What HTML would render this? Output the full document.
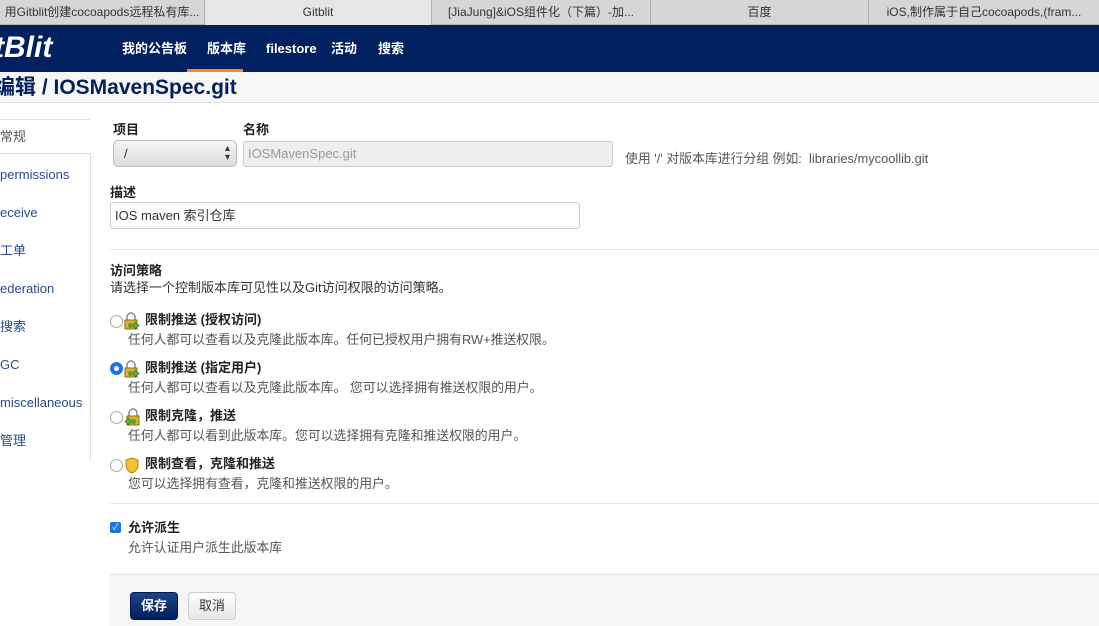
<!DOCTYPE html>
<html><head><meta charset="utf-8"><style>
*{box-sizing:border-box;margin:0;padding:0}
body{width:1099px;height:626px;overflow:hidden;background:#fff;font-family:"Liberation Sans","Noto Sans CJK SC",sans-serif;font-size:13px;line-height:16px;color:#333;position:relative}
.abs{position:absolute}
.tabs{top:0;left:0;width:1099px;height:25px;background:#d6d6d6;border-bottom:1px solid #b5b5b5}
.tab{position:absolute;top:0;height:25px;line-height:24px;text-align:center;font-size:12px;color:#333;border-right:1px solid #b0b0b0;white-space:nowrap;overflow:hidden}
.nav{top:25px;left:0;width:1099px;height:47px;background:#002060}
.nav a{position:absolute;top:0;line-height:47px;color:#fff;font-weight:bold;font-size:13px}
.hdr{top:72px;left:0;width:1099px;height:31px;background:#f7f7f7;border-bottom:1px solid #ddd}
.side a{position:absolute;left:0;color:#2a4a8a;font-size:13px}
.lbl{font-weight:bold;color:#222;font-size:13px}
.desc{color:#555;font-size:12.85px}
.radio{position:absolute;left:110px;width:13px;height:13px;border-radius:50%;border:1px solid #aaa;background:#fff}
</style></head><body>
<div class="abs tabs">
<div class="tab" style="left:0;width:205px">用Gitblit创建cocoapods远程私有库...</div>
<div class="tab" style="left:205px;width:227px;background:#e6e6e6">Gitblit</div>
<div class="tab" style="left:432px;width:219px">[JiaJung]&amp;iOS组件化（下篇）-加...</div>
<div class="tab" style="left:651px;width:218px">百度</div>
<div class="tab" style="left:869px;width:230px;border-right:none">iOS,制作属于自己cocoapods,(fram...</div>
</div>
<div class="abs nav">
<div style="position:absolute;left:-6px;top:6px;line-height:34px;color:#fff;font-weight:bold;font-style:italic;font-size:30px">tBlit</div>
<a style="left:122px">我的公告板</a>
<a style="left:207px">版本库</a>
<a style="left:266px">filestore</a>
<a style="left:331px">活动</a>
<a style="left:378px">搜索</a>
<div style="position:absolute;left:187px;top:44px;width:56px;height:3px;background:#f58a1f"></div>
</div>
<div class="abs hdr"><div style="position:absolute;left:-6px;top:3px;line-height:26px;font-size:21px;font-weight:bold;color:#002060">编辑 / IOSMavenSpec.git</div></div>

<div class="abs" style="left:0;top:119px;width:90px;border-top:1px solid #ddd"></div>
<div class="abs" style="left:0;top:153px;width:91px;height:308px;border-top:1px solid #ddd;border-right:1px solid #ddd"></div>
<div class="side">
<div class="abs" style="left:0;top:129px;color:#555">常规</div>
<a style="top:167px">permissions</a>
<a style="top:205px">eceive</a>
<a style="top:243px">工单</a>
<a style="top:281px">ederation</a>
<a style="top:319px">搜索</a>
<a style="top:357px">GC</a>
<a style="top:395px">miscellaneous</a>
<a style="top:433px">管理</a>
</div>

<div class="abs lbl" style="left:113px;top:122px">项目</div>
<div class="abs lbl" style="left:243px;top:122px">名称</div>
<div class="abs" style="left:113px;top:140px;width:124px;height:27px;border-radius:5px;border:1px solid #bbb;background:linear-gradient(#f4f4f4,#ddd);padding:5px 10px;color:#333">/<span style="position:absolute;right:6px;top:3px;font-size:10px;line-height:9px">▴<br>▾</span></div>
<div class="abs" style="left:243px;top:141px;width:370px;height:26px;border:1px solid #ccc;background:#eee;border-radius:3px;padding:4px 4px;color:#999">IOSMavenSpec.git</div>
<div class="abs desc" style="left:625px;top:151px">使用 '/' 对版本库进行分组 例如:&nbsp; libraries/mycoollib.git</div>
<div class="abs lbl" style="left:110px;top:185px">描述</div>
<div class="abs" style="left:110px;top:202px;width:470px;height:27px;border:1px solid #ccc;border-radius:3px;padding:5px 4px;color:#333">IOS maven 索引仓库</div>
<div class="abs" style="left:110px;top:249px;width:989px;border-top:1px solid #e5e5e5"></div>

<div class="abs lbl" style="left:110px;top:263px">访问策略</div>
<div class="abs" style="left:110px;top:280px;color:#333">请选择一个控制版本库可见性以及Git访问权限的访问策略。</div>

<div class="radio" style="top:315px"></div>
<div class="radio" style="top:362px;background:#1a73e8;border-color:#1a73e8"><div style="width:5px;height:5px;background:#fff;border-radius:50%;margin:3px"></div></div>
<div class="radio" style="top:411px"></div>
<div class="radio" style="top:459px"></div>
<svg class="abs" style="left:123px;top:312px" width="18" height="170">
<g><path d="M4 8V5a4 4 0 0 1 8 0v3" fill="none" stroke="#888" stroke-width="1.5"/><rect x="2" y="8" width="12" height="9" fill="#d9b23a" stroke="#8a6d10"/><path d="M6 12h6v-2l4 3.5-4 3.5v-2H6z" fill="#5cb82e" stroke="#2f7a14" stroke-width=".7"/></g>
<g transform="translate(0,48)"><path d="M4 8V5a4 4 0 0 1 8 0v3" fill="none" stroke="#888" stroke-width="1.5"/><rect x="2" y="8" width="12" height="9" fill="#d9b23a" stroke="#8a6d10"/><path d="M6 12h6v-2l4 3.5-4 3.5v-2H6z" fill="#5cb82e" stroke="#2f7a14" stroke-width=".7"/></g>
<g transform="translate(0,96)"><path d="M6 8V5a4 4 0 0 1 8 0v3" fill="none" stroke="#888" stroke-width="1.5"/><rect x="4" y="8" width="12" height="9" fill="#d9b23a" stroke="#8a6d10"/><path d="M12 12H6v-2l-4 3.5 4 3.5v-2h6z" fill="#5cb82e" stroke="#2f7a14" stroke-width=".7"/></g>
<g transform="translate(0,144)"><path d="M9 2l6 2v5c0 4-3 7-6 8-3-1-6-4-6-8V4z" fill="#f2c230" stroke="#b88a10"/></g>
</svg>
<div class="abs lbl" style="left:145px;top:312px">限制推送 (授权访问)</div>
<div class="abs desc" style="left:128px;top:332px">任何人都可以查看以及克隆此版本库。任何已授权用户拥有RW+推送权限。</div>
<div class="abs lbl" style="left:145px;top:360px">限制推送 (指定用户)</div>
<div class="abs desc" style="left:128px;top:380px">任何人都可以查看以及克隆此版本库。 您可以选择拥有推送权限的用户。</div>
<div class="abs lbl" style="left:145px;top:408px">限制克隆，推送</div>
<div class="abs desc" style="left:128px;top:428px">任何人都可以看到此版本库。您可以选择拥有克隆和推送权限的用户。</div>
<div class="abs lbl" style="left:145px;top:456px">限制查看，克隆和推送</div>
<div class="abs desc" style="left:128px;top:476px">您可以选择拥有查看，克隆和推送权限的用户。</div>
<div class="abs" style="left:110px;top:503px;width:989px;border-top:1px solid #e5e5e5"></div>

<div class="abs" style="left:110px;top:522px;width:11px;height:11px;border-radius:2px;background:#1a73e8;color:#fff;font-size:9px;line-height:11px;text-align:center">✓</div>
<div class="abs lbl" style="left:128px;top:520px">允许派生</div>
<div class="abs desc" style="left:128px;top:540px">允许认证用户派生此版本库</div>

<div class="abs" style="left:110px;top:574px;width:989px;height:52px;background:#f5f5f5;border-top:1px solid #e5e5e5"></div>
<div class="abs" style="left:130px;top:592px;width:48px;height:28px;border-radius:4px;background:linear-gradient(#1b4485,#002060);border:1px solid #001a50;color:#fff;font-weight:bold;text-align:center;line-height:26px">保存</div>
<div class="abs" style="left:188px;top:592px;width:48px;height:28px;border-radius:4px;background:linear-gradient(#fff,#e6e6e6);border:1px solid #ccc;color:#333;text-align:center;line-height:26px">取消</div>
</body></html>
